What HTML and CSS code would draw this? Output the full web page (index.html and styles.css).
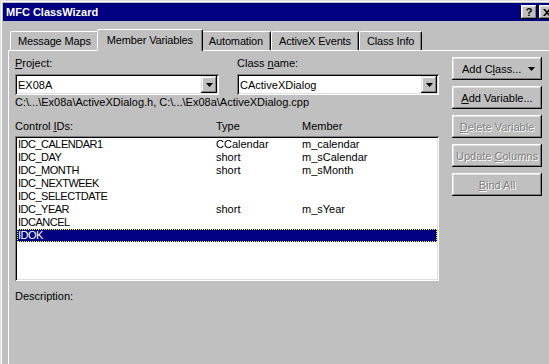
FILE: index.html
```html
<!DOCTYPE html>
<html lang="en">

<head>
    <meta charset="UTF-8">
    <meta name="viewport" content="width=device-width, initial-scale=1.0">
    <title>MFC ClassWizard</title>
    <link rel="stylesheet" href="styles.css">
</head>

<body>
    <div class="window">
        <div class="titlebar">
            <span class="title">MFC ClassWizard</span>
            <div class="caption-btns">
                <span class="cap-btn help">?</span>
                <span class="cap-btn close">
                    <svg width="8" height="7" viewBox="0 0 8 7">
                        <path d="M0 0h2l2 2.2L6 0h2L5 3.5 8 7H6L4 4.8 2 7H0l3-3.5z" fill="#000" />
                    </svg>
                </span>
            </div>
        </div>

        <div class="dialog">
            <div class="tabs">
                <div class="tab">Message Maps</div>
                <div class="tab active">Member Variables</div>
                <div class="tab">Automation</div>
                <div class="tab">ActiveX Events</div>
                <div class="tab">Class Info</div>
            </div>

            <div class="panel">
                <div class="main-col">
                    <div class="field-row">
                        <div class="field project">
                            <label><u>P</u>roject:</label>
                            <div class="combo">
                                <span class="combo-value">EX08A</span>
                                <span class="combo-arrow">
                                    <svg width="7" height="4" viewBox="0 0 7 4"><path d="M0 0h7L3.5 4z" fill="#000" /></svg>
                                </span>
                            </div>
                        </div>
                        <div class="field classname">
                            <label>Class <u>n</u>ame:</label>
                            <div class="combo">
                                <span class="combo-value">CActiveXDialog</span>
                                <span class="combo-arrow">
                                    <svg width="7" height="4" viewBox="0 0 7 4"><path d="M0 0h7L3.5 4z" fill="#000" /></svg>
                                </span>
                            </div>
                        </div>
                    </div>

                    <div class="path">C:\...\Ex08a\ActiveXDialog.h, C:\...\Ex08a\ActiveXDialog.cpp</div>

                    <div class="list-head">
                        <span>Control <u>I</u>Ds:</span>
                        <span>Type</span>
                        <span>Member</span>
                    </div>

                    <div class="listbox">
                        <div class="row"><span class="id">IDC_CALENDAR1</span><span>CCalendar</span><span>m_calendar</span></div>
                        <div class="row"><span class="id">IDC_DAY</span><span>short</span><span>m_sCalendar</span></div>
                        <div class="row"><span class="id">IDC_MONTH</span><span>short</span><span>m_sMonth</span></div>
                        <div class="row"><span class="id">IDC_NEXTWEEK</span><span></span><span></span></div>
                        <div class="row"><span class="id">IDC_SELECTDATE</span><span></span><span></span></div>
                        <div class="row"><span class="id">IDC_YEAR</span><span>short</span><span>m_sYear</span></div>
                        <div class="row"><span class="id">IDCANCEL</span><span></span><span></span></div>
                        <div class="row selected"><span class="id">IDOK</span><span></span><span></span></div>
                    </div>

                    <div class="desc">Description:</div>
                </div>

                <div class="side-col">
                    <div class="btn add-class">
                        <span>Add C<u>l</u>ass...</span>
                        <svg width="7" height="4" viewBox="0 0 7 4"><path d="M0 0h7L3.5 4z" fill="#000" /></svg>
                    </div>
                    <div class="btn"><span><u>A</u>dd Variable...</span></div>
                    <div class="btn disabled"><span><u>D</u>elete Variable</span></div>
                    <div class="btn disabled"><span>Update <u>C</u>olumns</span></div>
                    <div class="btn disabled"><span><u>B</u>ind All</span></div>
                </div>
            </div>
        </div>
    </div>
</body>

</html>
```

FILE: styles.css
```css
body {
    margin: 0;
    padding: 0;
    overflow: hidden;
    background-color: #c0c0c0;
    font-family: "Liberation Sans", Arial, sans-serif;
    font-size: 11px;
    color: #000;
}

u {
    text-decoration: underline;
    text-underline-offset: 1px;
}

.window {
    width: 560px;
    height: 380px;
    box-sizing: border-box;
    padding: 3px;
    background-color: #c0c0c0;
    box-shadow: inset 1px 1px #dfdfdf, inset 2px 2px #fff, inset -1px -1px #000, inset -2px -2px #808080;
}

.titlebar {
    height: 18px;
    display: flex;
    align-items: center;
    justify-content: space-between;
    padding: 0 2px 0 3px;
    background-color: #000080;
}

.title {
    color: #fff;
    font-weight: bold;
    font-size: 11px;
}

.caption-btns {
    display: flex;
    gap: 2px;
}

.cap-btn {
    width: 16px;
    height: 14px;
    box-sizing: border-box;
    display: flex;
    align-items: center;
    justify-content: center;
    background-color: #c0c0c0;
    font-weight: bold;
    font-size: 11px;
    box-shadow: inset -1px -1px #000, inset 1px 1px #fff, inset -2px -2px #808080, inset 2px 2px #dfdfdf;
}

/* tabbed dialog */

.dialog {
    padding: 8px 0 0 5px;
}

.tabs {
    display: flex;
    align-items: flex-end;
    height: 21px;
    padding-left: 2px;
}

.tab {
    height: 19px;
    box-sizing: border-box;
    padding: 0 7px;
    line-height: 18px;
    letter-spacing: -0.15px;
    border-top: 1px solid #fff;
    border-left: 1px solid #fff;
    border-right: 1px solid #000;
    border-radius: 2px 2px 0 0;
    box-shadow: inset -1px 0 #808080;
    background-color: #c0c0c0;
}

.tab.active {
    position: relative;
    z-index: 1;
    height: 22px;
    margin: 0 -2px -1px;
    padding: 0 9px;
    line-height: 20px;
}

.panel {
    display: flex;
    height: 320px;
    padding: 6px 0 0 6px;
    border-top: 1px solid #fff;
    border-left: 1px solid #fff;
}

.main-col {
    width: 424px;
}

.field-row {
    display: flex;
    gap: 18px;
}

.field.project {
    width: 204px;
}

.field.classname {
    width: 202px;
}

.field label {
    display: block;
    height: 13px;
    line-height: 13px;
    margin-bottom: 4px;
}

.combo {
    height: 21px;
    box-sizing: border-box;
    display: flex;
    align-items: center;
    justify-content: space-between;
    padding: 2px;
    background-color: #fff;
    box-shadow: inset 1px 1px #808080, inset -1px -1px #fff, inset 2px 2px #000, inset -2px -2px #dfdfdf;
}

.combo-value {
    padding-left: 1px;
}

.combo-arrow {
    width: 16px;
    height: 17px;
    box-sizing: border-box;
    display: flex;
    align-items: center;
    justify-content: center;
    background-color: #c0c0c0;
    box-shadow: inset -1px -1px #000, inset 1px 1px #dfdfdf, inset -2px -2px #808080, inset 2px 2px #fff;
}

.path {
    margin-top: 1px;
    height: 13px;
    line-height: 13px;
    white-space: nowrap;
}

.list-head {
    display: grid;
    grid-template-columns: 201px 86px 1fr;
    margin-top: 11px;
    height: 13px;
    line-height: 13px;
}

.listbox {
    margin-top: 3px;
    height: 145px;
    box-sizing: border-box;
    padding: 2px;
    background-color: #fff;
    box-shadow: inset 1px 1px #808080, inset -1px -1px #fff, inset 2px 2px #000, inset -2px -2px #dfdfdf;
}

.row {
    display: grid;
    grid-template-columns: 198px 86px 1fr;
    height: 13px;
    line-height: 13px;
    padding-left: 1px;
}

.row .id {
    letter-spacing: -0.5px;
}

.row.selected {
    background-color: #000080;
    color: #fff;
    outline: 1px dotted #ffff00;
    outline-offset: -1px;
}

.desc {
    margin-top: 9px;
    line-height: 13px;
}

/* buttons on the right */

.side-col {
    display: flex;
    flex-direction: column;
    gap: 6px;
    margin-left: 13px;
}

.btn {
    width: 90px;
    height: 23px;
    box-sizing: border-box;
    display: flex;
    align-items: center;
    justify-content: center;
    background-color: #c0c0c0;
    box-shadow: inset -1px -1px #000, inset 1px 1px #fff, inset -2px -2px #808080, inset 2px 2px #dfdfdf;
}

.btn.add-class {
    justify-content: space-between;
    padding: 0 7px 0 10px;
}

.btn.disabled {
    color: #808080;
    text-shadow: 1px 1px #fff;
}
```
